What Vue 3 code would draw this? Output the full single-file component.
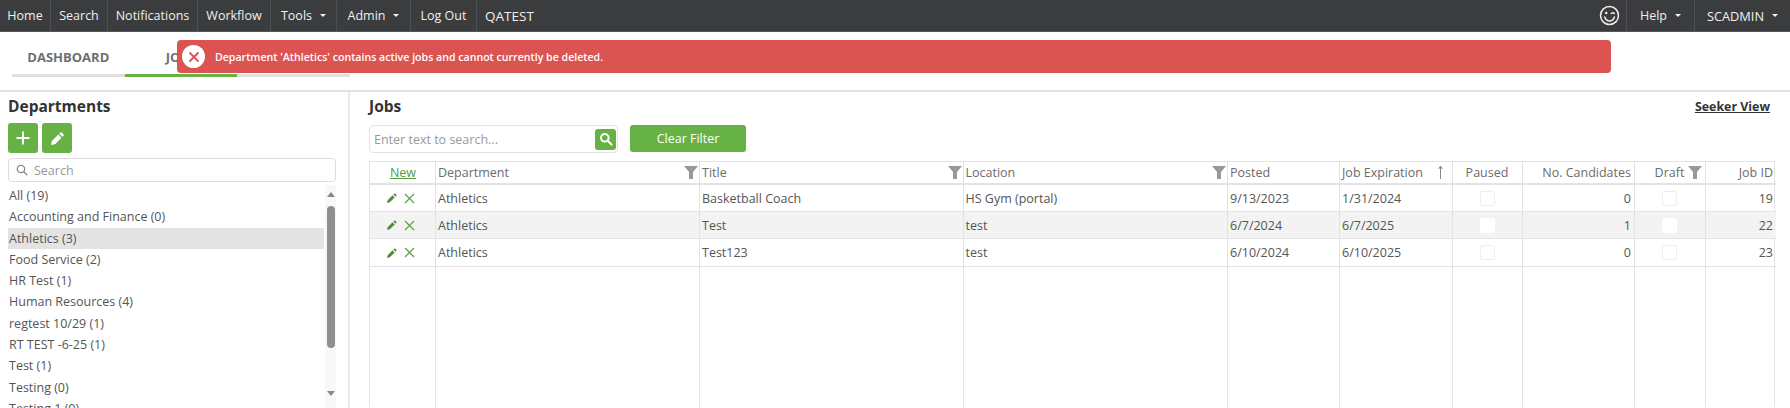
<script setup>
const departments = [
  { name: 'All (19)' }, { name: 'Accounting and Finance (0)' }, { name: 'Athletics (3)', active: true },
  { name: 'Food Service (2)' }, { name: 'HR Test (1)' }, { name: 'Human Resources (4)' },
  { name: 'regtest 10/29 (1)' }, { name: 'RT TEST -6-25 (1)' }, { name: 'Test (1)' },
  { name: 'Testing (0)' }, { name: 'Testing 1 (0)' }
]
const jobs = [
  { dept: 'Athletics', title: 'Basketball Coach', loc: 'HS Gym (portal)', posted: '9/13/2023', exp: '1/31/2024', cand: 0, id: 19 },
  { dept: 'Athletics', title: 'Test', loc: 'test', posted: '6/7/2024', exp: '6/7/2025', cand: 1, id: 22, alt: true },
  { dept: 'Athletics', title: 'Test123', loc: 'test', posted: '6/10/2024', exp: '6/10/2025', cand: 0, id: 23 }
]
const fillers = 10
</script>

<template>
  <div class="page">
    <nav class="topbar">
      <a class="nav-item w-home">Home</a>
      <a class="nav-item w-search">Search</a>
      <a class="nav-item w-notif">Notifications</a>
      <a class="nav-item w-flow">Workflow</a>
      <a class="nav-item w-tools">Tools <i class="caret"></i></a>
      <a class="nav-item w-admin">Admin <i class="caret"></i></a>
      <a class="nav-item w-logout">Log Out</a>
      <span class="brand">QATEST</span>
      <span class="spacer"></span>
      <span class="smile">
        <svg width="21" height="21" viewBox="0 0 22 22" fill="none" stroke="#eee" stroke-width="1.6">
          <circle cx="11" cy="11" r="9.4" />
          <path d="M6 12.6c.9 2.9 3.1 4.1 5.1 4.1s4.1-1.2 5-4.1" stroke-linecap="round" />
          <circle cx="7.6" cy="8.4" r="1.3" fill="#eee" stroke="none" />
          <path d="M13 8.8c.8-.9 2.2-.9 3 0" stroke-linecap="round" />
        </svg>
      </span>
      <a class="nav-item help">Help <i class="caret"></i></a>
      <a class="nav-item user">SCADMIN <i class="caret"></i></a>
    </nav>

    <div class="tabs-row">
      <div class="tabs">
        <div class="tab">DASHBOARD</div>
        <div class="tab on">JOBS</div>
        <div class="tab"></div>
      </div>
      <div class="alert">
        <span class="alert-icon">
          <svg width="12" height="12" viewBox="0 0 12 12" fill="none" stroke="#d9534f" stroke-width="1.8" stroke-linecap="round">
            <path d="M2 2l8 8M10 2l-8 8" />
          </svg>
        </span>
        <span>Department 'Athletics' contains active jobs and cannot currently be deleted.</span>
      </div>
    </div>

    <main class="content">
      <aside class="side">
        <h2>Departments</h2>
        <div class="side-btns">
          <button class="icon-btn">
            <svg width="16" height="16" viewBox="0 0 16 16" stroke="#fff" stroke-width="2"><path d="M8 1.5v13M1.5 8h13" /></svg>
          </button>
          <button class="icon-btn">
            <svg width="15" height="15" viewBox="0 0 16 16" fill="#fff"><path d="M1 15l1-4.4L8.8 3.8l3.4 3.4L5.4 14zM9.8 2.8l1-1a1.4 1.4 0 0 1 2 0l1.4 1.4a1.4 1.4 0 0 1 0 2l-1 1z" /></svg>
          </button>
        </div>
        <div class="side-search">
          <svg width="12" height="12" viewBox="0 0 12 12" fill="none" stroke="#888" stroke-width="1.3"><circle cx="5" cy="5" r="3.7" /><path d="M7.8 7.8l3.4 3.4" /></svg>
          <span>Search</span>
        </div>
        <div class="list-wrap">
          <ul class="dept-list">
            <li v-for="d in departments" :key="d.name" :class="{ active: d.active }">{{ d.name }}</li>
          </ul>
          <div class="scrollbar">
            <i class="arrow up"></i>
            <div class="thumb"></div>
            <i class="arrow down"></i>
          </div>
        </div>
      </aside>

      <section class="jobs">
        <div class="jobs-head">
          <h2>Jobs</h2>
          <a class="seeker">Seeker View</a>
        </div>
        <div class="filter-row">
          <div class="job-search">
            <span>Enter text to search...</span>
            <b class="search-go">
              <svg width="14" height="14" viewBox="0 0 14 14" fill="none" stroke="#fff" stroke-width="2"><circle cx="5.8" cy="5.8" r="3.8" /><path d="M8.8 8.8l3.8 3.8" stroke-linecap="round" /></svg>
            </b>
          </div>
          <button class="clear">Clear Filter</button>
        </div>

        <div class="grid">
          <div class="th center"><a class="new">New</a></div>
          <div class="th">Department<svg class="funnel" viewBox="0 0 14 14"><path d="M0 1h14L9 7v7H5V7z" /></svg></div>
          <div class="th">Title<svg class="funnel" viewBox="0 0 14 14"><path d="M0 1h14L9 7v7H5V7z" /></svg></div>
          <div class="th">Location<svg class="funnel" viewBox="0 0 14 14"><path d="M0 1h14L9 7v7H5V7z" /></svg></div>
          <div class="th">Posted</div>
          <div class="th">Job Expiration
            <svg class="sort" width="5" height="14" viewBox="0 0 5 14" fill="none" stroke="#888" stroke-width="1"><path d="M2.5 14V2M.7 4l1.8-3 1.8 3" /></svg>
          </div>
          <div class="th center">Paused</div>
          <div class="th right">No. Candidates</div>
          <div class="th center draft">Draft<svg class="funnel" viewBox="0 0 14 14"><path d="M0 1h14L9 7v7H5V7z" /></svg></div>
          <div class="th right">Job ID</div>

          <template v-for="j in jobs" :key="j.id">
            <div class="td actions" :class="{ alt: j.alt }">
              <svg width="10" height="10" viewBox="0 0 12 12" fill="#4a8f3a"><path d="M0 12l.8-3.4 5.8-5.8 2.6 2.6-5.8 5.8zM7.6 1.8l1-1a1 1 0 0 1 1.4 0l1.2 1.2a1 1 0 0 1 0 1.4l-1 1z" /></svg>
              <svg width="11" height="11" viewBox="0 0 11 11" fill="none" stroke="#5da34a" stroke-width="1.3"><path d="M1 1l9 9M10 1l-9 9" /></svg>
            </div>
            <div class="td" :class="{ alt: j.alt }">{{ j.dept }}</div>
            <div class="td" :class="{ alt: j.alt }">{{ j.title }}</div>
            <div class="td" :class="{ alt: j.alt }">{{ j.loc }}</div>
            <div class="td" :class="{ alt: j.alt }">{{ j.posted }}</div>
            <div class="td" :class="{ alt: j.alt }">{{ j.exp }}</div>
            <div class="td center" :class="{ alt: j.alt }"><i class="check"></i></div>
            <div class="td right" :class="{ alt: j.alt }">{{ j.cand }}</div>
            <div class="td center" :class="{ alt: j.alt }"><i class="check"></i></div>
            <div class="td right" :class="{ alt: j.alt }">{{ j.id }}</div>
          </template>
          <div v-for="n in fillers" :key="n" class="filler"></div>
        </div>
      </section>
    </main>
  </div>
</template>

<style>
html, body { margin: 0; background: #fff; overflow: hidden; }
</style>

<style scoped>
.page { width: 1790px; height: 408px; overflow: hidden; font-family: "Open Sans", "Noto Sans", sans-serif; font-size: 12.5px; color: #555; background: #fff; }
.topbar { height: 31px; background: #3b3c3e; border-bottom: 1px solid #55565a; display: flex; align-items: stretch; color: #f0f0f0; font-size: 12.5px; }
.nav-item { display: flex; align-items: center; justify-content: center; box-sizing: border-box; border-right: 1px solid #4e4f52; gap: 6px; white-space: nowrap; }
.w-home { width: 51px; }
.w-search { width: 57px; }
.w-notif { width: 90px; }
.w-flow { width: 73px; }
.w-tools { width: 66px; }
.w-admin { width: 74px; }
.w-logout { width: 66px; }
.brand { display: flex; align-items: center; padding-left: 8px; font-size: 13.5px; }
.spacer { flex: 1; }
.smile { display: flex; align-items: center; padding-right: 6px; border-right: 1px solid #4e4f52; }
.help { width: 68px; }
.user { width: 95px; border: 0; font-size: 12.8px; }
.caret { width: 0; height: 0; border-left: 3.5px solid transparent; border-right: 3.5px solid transparent; border-top: 3.5px solid #f4f4f4; margin-left: 2px; }

.tabs-row { position: relative; height: 58px; border-bottom: 2px solid #e3e3e3; }
.tabs { display: flex; margin-left: 12px; padding-top: 8px; width: 338px; }
.tab { flex: 1; height: 34px; display: flex; align-items: center; justify-content: center; border-bottom: 3px solid #e0e0e0; font-weight: 700; font-size: 13px; color: #6f6f6f; }
.tab.on { border-bottom-color: #66b245; }
.alert { position: absolute; left: 177px; top: 8px; width: 1434px; height: 33px; box-sizing: border-box; background: #db5451; border-radius: 4px; display: flex; align-items: center; padding-left: 5px; gap: 10px; color: #fff; font-size: 10.6px; font-weight: 600; }
.alert-icon { width: 23px; height: 23px; border-radius: 50%; background: #fff; display: flex; align-items: center; justify-content: center; }

.content { display: flex; height: 316px; }
.side { width: 350px; box-sizing: border-box; border-right: 2px solid #e8e8e8; padding: 4px 12px 0 8px; flex: none; }
h2 { margin: 0; font-size: 15.5px; font-weight: 700; color: #333; line-height: 20px; }
.side-btns { display: flex; gap: 4px; margin-top: 7px; }
.icon-btn { width: 30px; height: 30px; padding: 0; border: 0; border-radius: 3px; background: #66b245; display: flex; align-items: center; justify-content: center; }
.side-search { margin-top: 5px; height: 24px; box-sizing: border-box; border: 1px solid #ddd; border-radius: 4px; display: flex; align-items: center; gap: 6px; padding-left: 7px; color: #999; }
.list-wrap { display: flex; margin-top: 3px; }
.dept-list { list-style: none; margin: 0; padding: 0; width: 316px; flex: none; }
.dept-list li { height: 21.3px; line-height: 21px; padding-left: 1px; }
.dept-list li.active { background: #e3e3e3; }
.scrollbar { width: 14px; background: #f8f8f8; margin-left: 1px; height: 236px; display: flex; flex-direction: column; align-items: center; }
.thumb { width: 8px; height: 142px; margin-top: 9px; background: #8f8f8f; border-radius: 4px; }
.arrow { width: 0; height: 0; border-left: 4px solid transparent; border-right: 4px solid transparent; }
.arrow.up { border-bottom: 5px solid #888; margin-top: 7px; }
.arrow.down { border-top: 5px solid #888; margin-top: 43px; }

.jobs { flex: 1; padding: 4px 15px 0 19px; min-width: 0; }
.jobs-head { display: flex; justify-content: space-between; align-items: center; }
.seeker { font-weight: 700; font-size: 12.4px; color: #333; text-decoration: underline; margin-right: 5px; }
.filter-row { display: flex; gap: 12px; margin-top: 9px; align-items: flex-start; }
.job-search { width: 249px; height: 28px; box-sizing: border-box; border: 1px solid #e3e3e3; border-radius: 4px; display: flex; align-items: center; justify-content: space-between; padding: 0 1px 0 4px; color: #999; }
.search-go { width: 21px; height: 21px; background: #66b245; border-radius: 3px; display: flex; align-items: center; justify-content: center; }
.clear { width: 116px; height: 27px; border: 0; border-radius: 3px; background: #66b245; color: #fff; font: inherit; font-size: 12.5px; }

.grid { display: grid; grid-template-columns: 66px 264px 263.5px 264.5px 112px 113px 70px 112px 71px 70px; grid-template-rows: 23px 27px 27px 28px 140px; margin-top: 8px; border-left: 1px solid #e3e3e3; border-top: 1px solid #e3e3e3; width: 1406px; box-sizing: border-box; border-right: 1px solid #e3e3e3; }
.th, .td { display: flex; align-items: center; padding: 0 3px 0 2px; border-right: 1px solid #e3e3e3; border-bottom: 1px solid #e3e3e3; white-space: nowrap; position: relative; min-width: 0; }
.th:nth-child(10), .td:nth-child(10n) { border-right: 0; }
.th { border-bottom: 2px solid #e3e3e3; color: #6c6c6c; }
.td { color: #555; }
.center { justify-content: center; }
.right { justify-content: flex-end; }
.alt { background: #f3f3f3; }
.new { color: #4f9a3f; text-decoration: underline; margin-left: 2px; }
.funnel { position: absolute; right: 1px; top: 3px; width: 14px; height: 14px; fill: #999; }
.draft .funnel { right: 3px; }
.sort { position: absolute; right: 9px; top: 3px; }
.td.actions { justify-content: center; gap: 7px; padding-right: 6px; }
.check { width: 13px; height: 13px; border: 1px solid #eee; background: #fff; border-radius: 2px; display: block; }
.alt .check { border-color: #fff; }
.filler { border-right: 1px solid #e3e3e3; }
.filler:last-child { border-right: 0; }
</style>
